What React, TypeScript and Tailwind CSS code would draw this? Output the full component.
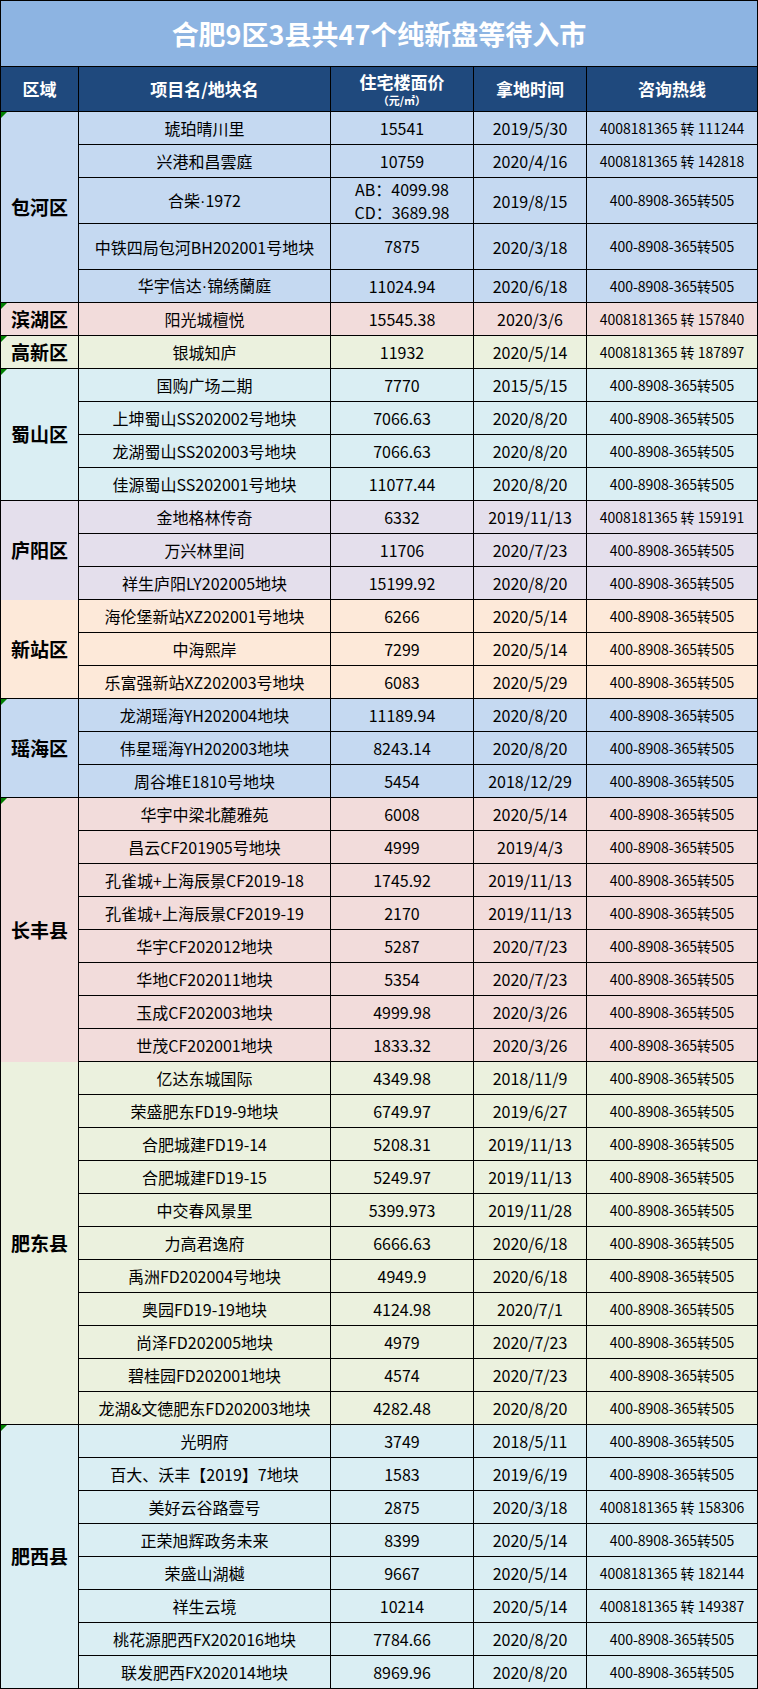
import React from "react";

type Row = { n: string; p: string | string[]; d: string; t?: string; tall?: boolean };
type Group = { name: string; bg: string; tri?: boolean; noBottom?: boolean; rows: Row[] };

const P = "400-8908-365转505";

const groups: Group[] = [
  {
    name: "包河区",
    bg: "bg-[#C5D9F1]",
    tri: true,
    rows: [
      { n: "琥珀晴川里", p: "15541", d: "2019/5/30", t: "4008181365 转 111244" },
      { n: "兴港和昌雲庭", p: "10759", d: "2020/4/16", t: "4008181365 转 142818" },
      { n: "合柴·1972", p: ["AB：4099.98", "CD：3689.98"], d: "2019/8/15", tall: true },
      { n: "中铁四局包河BH202001号地块", p: "7875", d: "2020/3/18", tall: true },
      { n: "华宇信达·锦绣蘭庭", p: "11024.94", d: "2020/6/18" },
    ],
  },
  {
    name: "滨湖区",
    bg: "bg-[#F2DCDB]",
    tri: true,
    rows: [{ n: "阳光城檀悦", p: "15545.38", d: "2020/3/6", t: "4008181365 转 157840" }],
  },
  {
    name: "高新区",
    bg: "bg-[#EBF1DE]",
    tri: true,
    rows: [{ n: "银城知庐", p: "11932", d: "2020/5/14", t: "4008181365 转 187897" }],
  },
  {
    name: "蜀山区",
    bg: "bg-[#DAEEF3]",
    tri: true,
    rows: [
      { n: "国购广场二期", p: "7770", d: "2015/5/15" },
      { n: "上坤蜀山SS202002号地块", p: "7066.63", d: "2020/8/20" },
      { n: "龙湖蜀山SS202003号地块", p: "7066.63", d: "2020/8/20" },
      { n: "佳源蜀山SS202001号地块", p: "11077.44", d: "2020/8/20" },
    ],
  },
  {
    name: "庐阳区",
    bg: "bg-[#E4DFEC]",
    noBottom: true,
    rows: [
      { n: "金地格林传奇", p: "6332", d: "2019/11/13", t: "4008181365 转 159191" },
      { n: "万兴林里间", p: "11706", d: "2020/7/23" },
      { n: "祥生庐阳LY202005地块", p: "15199.92", d: "2020/8/20" },
    ],
  },
  {
    name: "新站区",
    bg: "bg-[#FDE9D9]",
    rows: [
      { n: "海伦堡新站XZ202001号地块", p: "6266", d: "2020/5/14" },
      { n: "中海熙岸", p: "7299", d: "2020/5/14" },
      { n: "乐富强新站XZ202003号地块", p: "6083", d: "2020/5/29" },
    ],
  },
  {
    name: "瑶海区",
    bg: "bg-[#C5D9F1]",
    tri: true,
    rows: [
      { n: "龙湖瑶海YH202004地块", p: "11189.94", d: "2020/8/20" },
      { n: "伟星瑶海YH202003地块", p: "8243.14", d: "2020/8/20" },
      { n: "周谷堆E1810号地块", p: "5454", d: "2018/12/29" },
    ],
  },
  {
    name: "长丰县",
    bg: "bg-[#F2DCDB]",
    tri: true,
    noBottom: true,
    rows: [
      { n: "华宇中梁北麓雅苑", p: "6008", d: "2020/5/14" },
      { n: "昌云CF201905号地块", p: "4999", d: "2019/4/3" },
      { n: "孔雀城+上海辰景CF2019-18", p: "1745.92", d: "2019/11/13" },
      { n: "孔雀城+上海辰景CF2019-19", p: "2170", d: "2019/11/13" },
      { n: "华宇CF202012地块", p: "5287", d: "2020/7/23" },
      { n: "华地CF202011地块", p: "5354", d: "2020/7/23" },
      { n: "玉成CF202003地块", p: "4999.98", d: "2020/3/26" },
      { n: "世茂CF202001地块", p: "1833.32", d: "2020/3/26" },
    ],
  },
  {
    name: "肥东县",
    bg: "bg-[#EBF1DE]",
    rows: [
      { n: "亿达东城国际", p: "4349.98", d: "2018/11/9" },
      { n: "荣盛肥东FD19-9地块", p: "6749.97", d: "2019/6/27" },
      { n: "合肥城建FD19-14", p: "5208.31", d: "2019/11/13" },
      { n: "合肥城建FD19-15", p: "5249.97", d: "2019/11/13" },
      { n: "中交春风景里", p: "5399.973", d: "2019/11/28" },
      { n: "力高君逸府", p: "6666.63", d: "2020/6/18" },
      { n: "禹洲FD202004号地块", p: "4949.9", d: "2020/6/18" },
      { n: "奥园FD19-19地块", p: "4124.98", d: "2020/7/1" },
      { n: "尚泽FD202005地块", p: "4979", d: "2020/7/23" },
      { n: "碧桂园FD202001地块", p: "4574", d: "2020/7/23" },
      { n: "龙湖&文德肥东FD202003地块", p: "4282.48", d: "2020/8/20" },
    ],
  },
  {
    name: "肥西县",
    bg: "bg-[#DAEEF3]",
    tri: true,
    rows: [
      { n: "光明府", p: "3749", d: "2018/5/11" },
      { n: "百大、沃丰【2019】7地块", p: "1583", d: "2019/6/19" },
      { n: "美好云谷路壹号", p: "2875", d: "2020/3/18", t: "4008181365 转 158306" },
      { n: "正荣旭辉政务未来", p: "8399", d: "2020/5/14" },
      { n: "荣盛山湖樾", p: "9667", d: "2020/5/14", t: "4008181365 转 182144" },
      { n: "祥生云境", p: "10214", d: "2020/5/14", t: "4008181365 转 149387" },
      { n: "桃花源肥西FX202016地块", p: "7784.66", d: "2020/8/20" },
      { n: "联发肥西FX202014地块", p: "8969.96", d: "2020/8/20" },
    ],
  },
];

const spanClass: Record<number, string> = {
  1: "row-span-1",
  3: "row-span-3",
  4: "row-span-4",
  5: "row-span-5",
  8: "row-span-8",
  11: "row-span-11",
};

const cell = "flex items-center justify-center text-center border-r border-b border-black";

function Name({ text }: { text: string }) {
  const parts = text.split("·");
  if (parts.length === 1) return <>{text}</>;
  return (
    <span>
      {parts.map((p, i) => (
        <React.Fragment key={i}>
          {i > 0 && <span className="font-['Liberation_Sans',sans-serif]">·</span>}
          {p}
        </React.Fragment>
      ))}
    </span>
  );
}

export default function App() {
  return (
    <div className="w-[758px] bg-white text-black font-['Noto_Sans_CJK_SC',sans-serif]">
      <div className="h-[67px] border border-black bg-[#8DB4E2] flex items-center justify-center">
        <span className="text-white font-bold text-[27px] leading-none">
          合肥9区3县共47个纯新盘等待入市
        </span>
      </div>
      <div className="grid grid-cols-[78px_252px_143px_113px_171px] border-l border-black">
        <div className={`${cell} h-[45px] bg-[#1F497D] text-white font-bold text-[17px]`}>区域</div>
        <div className={`${cell} h-[45px] bg-[#1F497D] text-white font-bold text-[17px]`}>项目名/地块名</div>
        <div className={`${cell} h-[45px] bg-[#1F497D] text-white font-bold flex-col`}>
          <span className="text-[17px] leading-[22px]">住宅楼面价</span>
          <span className="text-[11px] leading-[14px]">（元/㎡）</span>
        </div>
        <div className={`${cell} h-[45px] bg-[#1F497D] text-white font-bold text-[17px]`}>拿地时间</div>
        <div className={`${cell} h-[45px] bg-[#1F497D] text-white font-bold text-[17px]`}>咨询热线</div>

        {groups.map((g) => (
          <React.Fragment key={g.name}>
            <div
              className={`relative flex items-center justify-center border-r border-black ${
                g.noBottom ? "" : "border-b"
              } ${spanClass[g.rows.length]} ${g.bg} font-bold text-[19px]`}
            >
              {g.tri && (
                <span className="absolute left-0 top-0 w-0 h-0 border-t-[6px] border-t-[#008000] border-r-[6px] border-r-transparent" />
              )}
              {g.name}
            </div>
            {g.rows.map((r, i) => (
              <React.Fragment key={i}>
                <div className={`${cell} ${g.bg} ${r.tall ? "h-[46px]" : "h-[33px]"} text-[16px]`}>
                  <Name text={r.n} />
                </div>
                <div className={`${cell} ${g.bg} ${r.tall ? "h-[46px]" : "h-[33px]"} text-[16px] flex-col leading-[23px]`}>
                  {Array.isArray(r.p) ? r.p.map((x) => <span key={x}>{x}</span>) : r.p}
                </div>
                <div className={`${cell} ${g.bg} ${r.tall ? "h-[46px]" : "h-[33px]"} text-[16px]`}>{r.d}</div>
                <div className={`${cell} ${g.bg} ${r.tall ? "h-[46px]" : "h-[33px]"} text-[14px]`}>{r.t ?? P}</div>
              </React.Fragment>
            ))}
          </React.Fragment>
        ))}
      </div>
    </div>
  );
}
